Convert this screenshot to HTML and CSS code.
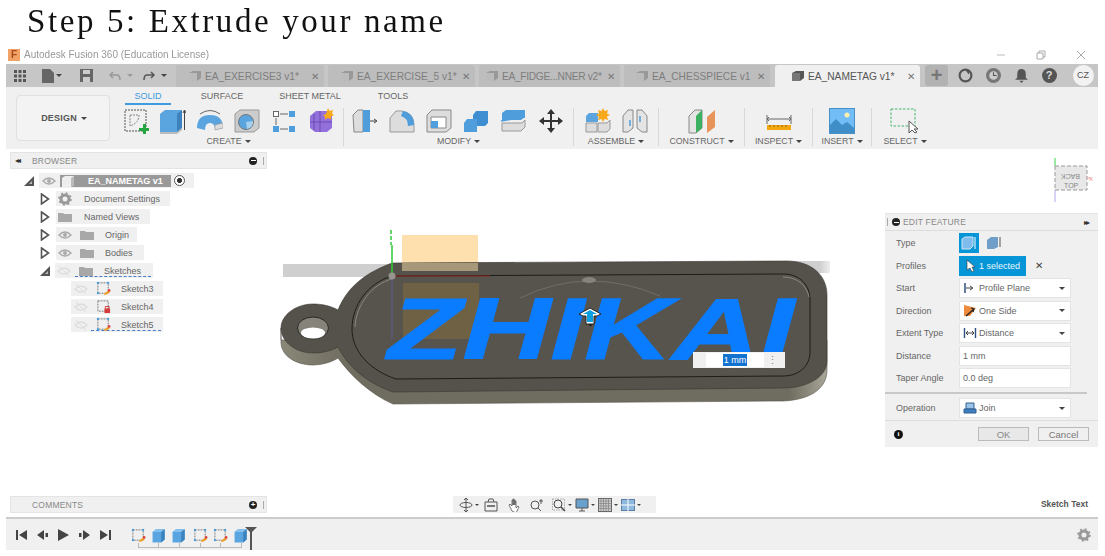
FILE: index.html
```html
<!DOCTYPE html>
<html lang="en">
<head>
<meta charset="utf-8">
<title>Step 5: Extrude your name</title>
<link rel="stylesheet" href="styles.css">
</head>
<body>
<svg class="defs" width="0" height="0" aria-hidden="true">
  <defs>
    <symbol id="box" viewBox="0 0 26 26"><path d="M1 7l6-5h15v18l-6 5H1z" fill="#5aa5e0"/><path d="M1 7l6-5h15l-6 5z" fill="#86c0ee"/><path d="M16 7l6-5v18l-6 5z" fill="#3c82bd"/></symbol>
    <symbol id="sk" viewBox="0 0 16 16"><rect x="2" y="2" width="11" height="11" fill="none" stroke="#777" stroke-dasharray="2 1"/><g fill="#3b9be0"><rect x="1" y="1" width="2" height="2"/><rect x="12" y="1" width="2" height="2"/><rect x="1" y="12" width="2" height="2"/></g><path d="M8 14l5-4 2 2-5 3z" fill="#f0a020"/><circle cx="14" cy="10" r="1.4" fill="#e04040"/></symbol>
    <symbol id="eye" viewBox="0 0 14 10"><path d="M1 5q6-6 12 0q-6 6-12 0z" fill="none" stroke="#aaa" stroke-width="1.4"/><circle cx="7" cy="5" r="2" fill="#aaa"/></symbol>
    <symbol id="eyeoff" viewBox="0 0 14 10"><path d="M1 5q6-6 12 0q-6 6-12 0z" fill="none" stroke="#ddd" stroke-width="1.4"/><path d="M2 0l10 10" stroke="#ddd"/></symbol>
    <symbol id="folder" viewBox="0 0 14 10"><path d="M0 1h5l1 1h8v8H0z" fill="#a8a8a8"/></symbol>
    <symbol id="tab3d" viewBox="0 0 14 12"><path d="M1 3l4-2h8v7l-4 3H1z" fill="#999"/><path d="M1 3h8v8H1z" fill="#bbb"/></symbol>
    <symbol id="tri" viewBox="0 0 10 12"><path d="M1.5 1l7 5-7 5z" fill="#fff" stroke="#555" stroke-width="1.6"/></symbol>
    <symbol id="tridown" viewBox="0 0 12 12"><path d="M1 11L11 1v10z" fill="#555"/><path d="M6 9l3-3v3z" fill="#bbb"/></symbol>
  </defs>
</svg>
<h1 class="heading">Step 5: Extrude your name</h1>
<div class="app">
  <header class="titlebar">
    <span class="logo">F</span>
    <span class="title">Autodesk Fusion 360 (Education License)</span>
    <span class="winctl">
      <svg width="10" height="10" viewBox="0 0 10 10"><path d="M1 5h8" stroke="#bbb"/></svg>
      <svg width="10" height="10" viewBox="0 0 10 10"><path d="M1 3h6v6H1zM3 3V1h6v6H7" fill="none" stroke="#aaa"/></svg>
      <svg width="10" height="10" viewBox="0 0 10 10"><path d="M1 1l8 8M9 1l-8 8" stroke="#aaa"/></svg>
    </span>
  </header>
  <nav class="tabbar">
    <div class="qa">
      <svg class="qa-grid" width="12" height="12" viewBox="0 0 12 12"><path d="M0 0h3v3H0zM4.500 0h3v3h-3zM9 0h3v3H9zM0 4.500h3v3H0zM4.500 4.500h3v3h-3zM9 4.500h3v3H9zM0 9h3v3H0zM4.500 9h3v3h-3zM9 9h3v3H9z" fill="#555"/></svg>
      <svg class="qa-file" width="12" height="14" viewBox="0 0 12 14"><path d="M0 0h8l4 4v10H0z" fill="#666"/></svg><i class="caret qa-c1"></i>
      <svg class="qa-save" width="13" height="13" viewBox="0 0 13 13"><path d="M0 0h13v13H0z" fill="#666"/><path d="M3 1h7v4H3zM3 8h7v5H3z" fill="#ccc"/></svg>
      <svg class="qa-undo" width="12" height="10" viewBox="0 0 12 10"><path d="M4 1L1 4l3 3M1 4h7q3 0 3 5" fill="none" stroke="#999" stroke-width="1.5"/></svg><i class="caret caret-light qa-c2"></i>
      <svg class="qa-redo" width="12" height="10" viewBox="0 0 12 10"><path d="M8 1l3 3-3 3M11 4H4Q1 4 1 9" fill="none" stroke="#555" stroke-width="1.5"/></svg><i class="caret qa-c3"></i>
    </div>
    <div class="doc-tab tab-1"><svg class="tab-ico" width="14" height="12"><use href="#tab3d"/></svg><span class="tab-name">EA_EXERCISE3 v1*</span><span class="tab-x">✕</span></div>
    <div class="doc-tab tab-2"><svg class="tab-ico" width="14" height="12"><use href="#tab3d"/></svg><span class="tab-name">EA_EXERCISE_5 v1*</span><span class="tab-x">✕</span></div>
    <div class="doc-tab tab-3"><svg class="tab-ico" width="14" height="12"><use href="#tab3d"/></svg><span class="tab-name">EA_FIDGE...NNER v2*</span><span class="tab-x">✕</span></div>
    <div class="doc-tab tab-4"><svg class="tab-ico" width="14" height="12"><use href="#tab3d"/></svg><span class="tab-name">EA_CHESSPIECE v1</span><span class="tab-x">✕</span></div>
    <div class="doc-tab tab-active"><svg class="tab-ico" width="14" height="12" viewBox="0 0 14 12"><path d="M1 3l4-2h8v7l-4 3H1z" fill="#555"/><path d="M1 3h8v8H1z" fill="#777"/></svg><span class="tab-name">EA_NAMETAG v1*</span><span class="tab-x">✕</span></div>
    <div class="tab-plus">+</div>
    <div class="tray">
      <svg width="15" height="15" viewBox="0 0 14 14"><circle cx="7" cy="7" r="5.500" fill="none" stroke="#555" stroke-width="2"/><path d="M7 2l4 1-1 3z" fill="#555"/></svg>
      <svg width="15" height="15" viewBox="0 0 14 14"><circle cx="7" cy="7" r="7" fill="#777"/><circle cx="7" cy="7" r="4" fill="#ccc"/><path d="M7 4v3h3" fill="none" stroke="#555"/></svg>
      <svg width="15" height="15" viewBox="0 0 14 14"><path d="M7 1q4 0 4 5v3l2 2H1l2-2V6q0-5 4-5zM5 12h4l-2 2z" fill="#555"/></svg>
      <span class="help">?</span>
      <span class="avatar">CZ</span>
    </div>
  </nav>
  <section class="toolbar">
    <button class="design">DESIGN<i class="caret"></i></button>
    <div class="ribbon">
      <div class="ribbon-tabs">
        <span class="rt rt-solid">SOLID</span>
        <span class="rt rt-surface">SURFACE</span>
        <span class="rt rt-sheet">SHEET METAL</span>
        <span class="rt rt-tools">TOOLS</span>
      </div>
      <div class="groups">
        <div class="group g-create">
          <div class="icons">
            <svg width="26" height="26" viewBox="0 0 26 26"><rect x="2" y="2" width="21" height="21" fill="none" stroke="#555" stroke-dasharray="2 1"/><path d="M7 7h9q0 8-9 11z" fill="none" stroke="#888" stroke-dasharray="2 1"/><path d="M16 20h4v-4h3v4h3v3h-3v3h-3v-3h-4z" fill="#26a640"/></svg>
            <svg width="26" height="26" viewBox="0 0 26 26"><path d="M0 6l5-4h17v18l-5 4H0z" fill="#5aa5e0"/><path d="M17 6l5-4v18l-5 4z" fill="#3c82bd"/><path d="M0 24h17l5-4v2l-5 4H0z" fill="#bbb"/><path d="M24.500 22V3M23 5l1.500-3L26 5" fill="none" stroke="#444"/></svg>
            <svg width="26" height="26" viewBox="0 0 26 26"><path d="M0 20q0-13 13-13t13 13l-8 2q0-7-5-7t-5 7z" fill="#5aa5e0"/><path d="M18 22l8-2v-5l-8 2z" fill="#ddd" stroke="#999" stroke-width=".6"/><path d="M3 6q10-7 20 0" fill="none" stroke="#666"/></svg>
            <svg width="26" height="26" viewBox="0 0 26 26"><path d="M1 6l5-4h19v18l-5 4H1z" fill="#ccc" stroke="#999"/><circle cx="12" cy="14" r="7.500" fill="#5aa5e0" stroke="#777"/><path d="M12 14l7-1a7 7 0 0 1-6 8z" fill="#a8d0ee"/></svg>
            <svg width="26" height="26" viewBox="0 0 26 26"><g fill="#4f9ddb"><rect x="18" y="3" width="6" height="6"/><rect x="2" y="18" width="6" height="6"/><rect x="18" y="18" width="6" height="6"/></g><rect x="2.500" y="3.500" width="5" height="5" fill="#fff" stroke="#666"/><path d="M9 6h8M9 21h8M5 10v7" stroke="#666"/></svg>
            <svg width="26" height="26" viewBox="0 0 26 26"><path d="M2 8l6-5h12l4 5v12l-5 4H7l-5-4z" fill="#9470dc"/><path d="M2 14h22M12 3v21M6 6v16" stroke="#6b4cae"/><path d="M20 0l1.500 3 3.500-1-1 3.500 2 1.500-3 1.500v3l-3-1.500-3 1.500V9l-2-2 3-1z" fill="#f7a81b"/></svg>
          </div>
          <span class="glabel">CREATE<i class="caret"></i></span>
        </div>
        <div class="group g-modify">
          <div class="icons">
            <svg width="26" height="26" viewBox="0 0 26 26"><path d="M1 7l5-5h5v22H2z" fill="#ddd" stroke="#888"/><path d="M11 2h7v22h-7z" fill="#4f9ddb"/><path d="M18 13h6M22 11l3 2-3 2" fill="none" stroke="#444"/></svg>
            <svg width="26" height="26" viewBox="0 0 26 26"><path d="M1 24V10l6-7h6q12 2 12 14v7z" fill="#ddd" stroke="#999"/><path d="M14 3q11 2 11 14l-6 1q0-8-7-10z" fill="#4f9ddb"/></svg>
            <svg width="26" height="26" viewBox="0 0 26 26"><path d="M1 7l5-5h19v18l-5 4H1z" fill="#ddd" stroke="#888"/><path d="M5 9h15v11H5z" fill="#fff" stroke="#888"/><path d="M5 13h7v7H5z" fill="#4f9ddb"/></svg>
            <svg width="26" height="26" viewBox="0 0 26 26"><path d="M10 7l3-4h12v12l-3 3H10z" fill="#3f8ed2"/><path d="M1 15l3-4h10v13H1z" fill="#4f9ddb"/></svg>
            <svg width="26" height="26" viewBox="0 0 26 26"><path d="M2 5l4-3h19v7l-4 3H2z" fill="#4f9ddb"/><path d="M1 13l24-4" stroke="#4f9ddb" stroke-width="1.500"/><path d="M2 15h20l3-3v7l-4 4H2z" fill="#ddd" stroke="#999"/></svg>
            <svg width="28" height="26" viewBox="0 0 28 26"><path d="M14 1l4 5h-3v6h6V9l5 4-5 4v-3h-6v6h3l-4 5-4-5h3v-6H7v3l-5-4 5-4v3h6V6h-3z" fill="#333"/></svg>
          </div>
          <span class="glabel">MODIFY<i class="caret"></i></span>
        </div>
        <div class="group g-assemble">
          <div class="icons">
            <svg width="26" height="26" viewBox="0 0 26 26"><path d="M1 8l3-3h9v9H1z" fill="#5aa5e0"/><path d="M1 15h11v9H1zM13 15h9l3-3v9l-3 3h-9z" fill="#ddd" stroke="#999"/><path d="M18 0l1.500 3 3.500-1-1 3.500 3 1.500-3 1.500 1 3.500-3.500-1-1.500 3-1.500-3-3.500 1 1-3.500-3-1.500 3-1.500-1-3.500 3.500 1z" fill="#f7a81b"/></svg>
            <svg width="26" height="26" viewBox="0 0 26 26"><path d="M1 24V8l5-6h5v18l-5 4zM25 24V8l-5-6h-5v18l5 4z" fill="#e4e4e4" stroke="#888"/><path d="M8 12v6M18 8v6" stroke="#4f9ddb" stroke-width="1.500"/></svg>
          </div>
          <span class="glabel">ASSEMBLE<i class="caret"></i></span>
        </div>
        <div class="group g-construct">
          <div class="icons">
            <svg width="27" height="26" viewBox="0 0 27 26"><path d="M1 8l6-6h7v18l-6 5H1z" fill="#e4e4e4" stroke="#888"/><path d="M8 8l6-6v18l-6 5z" fill="#3bb060"/><path d="M19 9l8-7v17l-8 6z" fill="#e8935a"/></svg>
          </div>
          <span class="glabel">CONSTRUCT<i class="caret"></i></span>
        </div>
        <div class="group g-inspect">
          <div class="icons">
            <svg width="26" height="26" viewBox="0 0 26 26"><path d="M1 7v9M25 7v9M1 11h24M3 9l-2 2 2 2M23 9l2 2-2 2" fill="none" stroke="#666"/><path d="M1 17h24v5H1z" fill="#f4a70e"/><path d="M4 17v2M8 17v2M12 17v2M16 17v2M20 17v2" stroke="#8a6a10"/></svg>
          </div>
          <span class="glabel">INSPECT<i class="caret"></i></span>
        </div>
        <div class="group g-insert">
          <div class="icons">
            <svg width="26" height="26" viewBox="0 0 26 26"><rect x="0.500" y="0.500" width="25" height="25" fill="#72bdf5" stroke="#4a90c8"/><circle cx="18" cy="7" r="2.500" fill="#fff0b0"/><path d="M1 25V17l6-6 6 6 5-3 7 6v5z" fill="#3f8ec8"/></svg>
          </div>
          <span class="glabel">INSERT<i class="caret"></i></span>
        </div>
        <div class="group g-select">
          <div class="icons">
            <svg width="30" height="26" viewBox="0 0 30 26"><rect x="1" y="1" width="24" height="17" fill="none" stroke="#45b56c" stroke-dasharray="2.500 1.500"/><path d="M19 13v12l3-3 3 3 2-1-3-3h4z" fill="#fff" stroke="#555"/></svg>
          </div>
          <span class="glabel">SELECT<i class="caret"></i></span>
        </div>
      </div>
    </div>
  </section>
  <main class="viewport">
    <svg class="model" width="1092" height="368" viewBox="6 149 1092 368">
      <defs>
        <linearGradient id="wall" x1="0" x2="1"><stop offset="0" stop-color="#8a8878"/><stop offset=".12" stop-color="#6f6c60"/><stop offset=".93" stop-color="#6f6c60"/><stop offset="1" stop-color="#a8a698"/></linearGradient>
        <linearGradient id="fade" x1="0" x2="1"><stop offset=".75" stop-color="#cfcfcf"/><stop offset="1" stop-color="#efefef"/></linearGradient>
      </defs>
      <rect class="ground" x="283" y="264" width="110" height="13"/>
      <rect class="ground-r" x="790" y="261" width="40" height="12"/>
      <rect class="orange" x="402" y="235" width="76" height="36"/>
      <!-- side wall -->
      <path class="wall" d="M281 328V342C281 356 296 365 313 365C322 365 332 362 338 358C350 375 370 394 393 404L783 401C808 400 827 390 827 370V340H281Z"/>
      <!-- top face -->
      <path class="face" d="M392 263L787 261C811 261 827 275 827 295V361C827 377 807 388 783 388L393 392C370 384 350 370 338 347C331 351 322 353 313 353C296 353 281 342 281 328C281 315 296 304 313 304C322 304 331 306 338 310C348 285 368 272 392 263Z"/>
      <path class="rim" d="M392 276L783 274C801 274 810 286 810 300V352C810 366 799 376 783 376L396 379C372 371 352 353 352 329C352 305 368 283 392 276Z"/>
      <path class="rim-soft" d="M392 279C372 284 356 305 355 327"/>
      <path class="rim-soft" d="M783 277C799 277 807 287 809 297"/>
      <!-- ring hole -->
      <ellipse class="hole-bore" cx="313" cy="328" rx="15.500" ry="11"/>
      <ellipse class="hole-w" cx="313" cy="333" rx="12" ry="5.500"/>
      <rect class="orange-over" x="403" y="283" width="76" height="56"/>
      <rect class="orange-rim" x="402" y="263" width="76" height="8"/>
      <path class="arc" d="M520 298q35-17 70-17t70 15"/>
      <ellipse class="disc" cx="589" cy="280" rx="7" ry="3"/>
      <path class="red-axis" d="M392 276H490"/>
      <path class="blue-axis" d="M392 278V340"/>
      <path class="green-solid" d="M392 245V276"/>
      <path class="green-dash" d="M391 230V245"/>
      <circle class="node" cx="392" cy="276" r="3.500"/>
      <text class="zhikai" x="388" y="359" textLength="406" lengthAdjust="spacingAndGlyphs">ZHIKAI</text>
      <path class="manip-stem" d="M590.500 320v6"/>
      <path class="manip" d="M590 308l11 6-4 2h-3v8h-8v-8h-3l-4-2z"/>
      <path class="manip-in" d="M590 310l7 4h-4v8h-6v-8h-4z"/>
    </svg>

    <div class="viewcube">
      <svg width="46" height="50" viewBox="0 0 46 50"><rect x="6" y="8" width="32" height="24" fill="#e8e8e8" stroke="#999" stroke-dasharray="4 2"/><path d="M6 8V0" stroke="#7be08a" stroke-width="1.500"/><path d="M38 20h3" stroke="#f2a0a0"/><path d="M6 32v12" stroke="#b0a8e8"/><text class="cube-txt" x="13" y="14" transform="rotate(180 22 15)">BACK</text><text class="cube-txt" x="15" y="30">TOP</text><text class="cube-x" x="40" y="23">X</text></svg>
    </div>

    <aside class="browser">
      <div class="panelhead">
        <span class="rew">◂◂</span><span class="ph-title">BROWSER</span>
        <span class="minus"></span><span class="grip"></span>
      </div>
      <ul class="tree">
        <li class="row r-root">
          <svg class="arrow" width="12" height="12"><use href="#tridown"/></svg>
          <div class="chip chip-root">
            <svg class="ico-eye" width="14" height="10"><use href="#eye"/></svg>
            <div class="rootbar"><svg width="14" height="12" viewBox="0 0 14 12"><path d="M1 3l3-2h9v9l-3 2H1z" fill="#eee"/><path d="M10 3l3-2v9l-3 2z" fill="#bbb"/></svg><span>EA_NAMETAG v1</span></div>
            <span class="radio"></span>
          </div>
        </li>
        <li class="row r-l1">
          <svg class="arrow-r" width="10" height="12"><use href="#tri"/></svg>
          <div class="chip w-doc">
            <svg class="gear" width="14" height="14" viewBox="0 0 14 14"><circle cx="7" cy="7" r="4" fill="none" stroke="#999" stroke-width="3"/><circle cx="7" cy="7" r="6" fill="none" stroke="#999" stroke-width="1.600" stroke-dasharray="2 2.700"/></svg>
            <span class="lbl">Document Settings</span>
          </div>
        </li>
        <li class="row r-l1">
          <svg class="arrow-r" width="10" height="12"><use href="#tri"/></svg>
          <div class="chip w-views">
            <svg class="folder-a" width="14" height="10"><use href="#folder"/></svg>
            <span class="lbl">Named Views</span>
          </div>
        </li>
        <li class="row r-l1">
          <svg class="arrow-r" width="10" height="12"><use href="#tri"/></svg>
          <div class="chip w-origin">
            <svg class="ico-eye-2" width="14" height="10"><use href="#eye"/></svg>
            <svg class="folder-b" width="14" height="10"><use href="#folder"/></svg>
            <span class="lbl-b">Origin</span>
          </div>
        </li>
        <li class="row r-l1">
          <svg class="arrow-r" width="10" height="12"><use href="#tri"/></svg>
          <div class="chip w-bodies">
            <svg class="ico-eye-2" width="14" height="10"><use href="#eye"/></svg>
            <svg class="folder-b" width="14" height="10"><use href="#folder"/></svg>
            <span class="lbl-b">Bodies</span>
          </div>
        </li>
        <li class="row r-l1">
          <svg class="arrow-d" width="12" height="12"><use href="#tridown"/></svg>
          <div class="chip w-sketches wavy">
            <svg class="ico-eye-2" width="14" height="10"><use href="#eyeoff"/></svg>
            <svg class="folder-b" width="14" height="10"><use href="#folder"/></svg>
            <span class="lbl-b">Sketches</span>
          </div>
        </li>
        <li class="row r-l2">
          <div class="chip w-sk">
            <svg class="ico-eye-3" width="14" height="10"><use href="#eyeoff"/></svg>
            <svg class="sk-ico" width="15" height="15"><use href="#sk"/></svg>
            <span class="lbl-c">Sketch3</span>
          </div>
        </li>
        <li class="row r-l2">
          <div class="chip w-sk">
            <svg class="ico-eye-3" width="14" height="10"><use href="#eyeoff"/></svg>
            <svg class="sk-ico" width="15" height="15" viewBox="0 0 16 16"><rect x="2" y="2" width="11" height="11" fill="none" stroke="#777" stroke-dasharray="2 1"/><rect x="9" y="10" width="6" height="5" fill="#d83b3b"/><path d="M10 10V8h4v2" fill="none" stroke="#d83b3b"/></svg>
            <span class="lbl-c">Sketch4</span>
          </div>
        </li>
        <li class="row r-l2">
          <div class="chip w-sk wavy">
            <svg class="ico-eye-3" width="14" height="10"><use href="#eyeoff"/></svg>
            <svg class="sk-ico" width="15" height="15"><use href="#sk"/></svg>
            <span class="lbl-c">Sketch5</span>
          </div>
        </li>
      </ul>
    </aside>

    <div class="dimbox">
      <span class="dim-grip"></span>
      <span class="dim-input"><span class="dim-sel">1 mm</span></span>
      <span class="dim-dots">⋮</span>
    </div>

    <aside class="feature">
      <div class="feat-head"><span class="grip"></span><span class="minus"></span><span class="ph-title feat-title">EDIT FEATURE</span><span class="ffw">▸▸</span></div>
      <div class="feat-body">
        <div class="frow"><label>Type</label>
          <span class="type-on"><svg width="16" height="14" viewBox="0 0 16 14"><path d="M1 3l3-2h8v9l-3 3H1z" fill="#7dbcec" stroke="#cfe6f7"/><path d="M14 1v12" stroke="#fff"/></svg></span>
          <svg class="type-off" width="16" height="14" viewBox="0 0 16 14"><path d="M1 4l4-3h7v10l-4 2H1z" fill="#6f9fc8"/><path d="M14 1v10" stroke="#555"/></svg>
        </div>
        <div class="frow"><label>Profiles</label>
          <span class="profiles"><svg width="10" height="13" viewBox="0 0 10 13"><path d="M1 1v10l3-2 2 4 2-1-2-4h3z" fill="#fff" stroke="#333" stroke-width=".6"/></svg>1 selected</span>
          <span class="clear">✕</span>
        </div>
        <div class="frow"><label>Start</label>
          <span class="sel"><svg width="14" height="12" viewBox="0 0 14 12"><path d="M2 1v10" stroke="#2f4f80" stroke-width="1.500"/><path d="M3 6h6M7 4l3 2-3 2" fill="none" stroke="#444"/></svg><span>Profile Plane</span><i class="caret"></i></span>
        </div>
        <div class="frow"><label>Direction</label>
          <span class="sel"><svg width="14" height="13" viewBox="0 0 14 13"><path d="M1 1l12 3-6 8H1z" fill="#ee8a3c"/><path d="M3 12l8-7M8 4l3 1-1 3" fill="none" stroke="#222" stroke-width="1.200"/></svg><span>One Side</span><i class="caret"></i></span>
        </div>
        <div class="frow"><label>Extent Type</label>
          <span class="sel"><svg width="14" height="12" viewBox="0 0 14 12"><path d="M1.500 1v10M12.500 1v10" stroke="#2f4f80" stroke-width="1.400"/><path d="M3 6h8M5 4L3 6l2 2M9 4l2 2-2 2" fill="none" stroke="#444"/></svg><span>Distance</span><i class="caret"></i></span>
        </div>
        <div class="frow"><label>Distance</label><span class="inp">1 mm</span></div>
        <div class="frow"><label>Taper Angle</label><span class="inp">0.0 deg</span></div>
        <div class="fsep"></div>
        <div class="frow"><label>Operation</label>
          <span class="sel"><svg width="14" height="12" viewBox="0 0 14 12"><path d="M3 1h8v6H3z" fill="#9cc4e8" stroke="#2f5f90"/><path d="M1 7h12v4H1z" fill="#3f7fbf" stroke="#2f5f90"/></svg><span>Join</span><i class="caret"></i></span>
        </div>
      </div>
      <div class="feat-foot">
        <span class="info">i</span>
        <button class="btn btn-ok">OK</button>
        <button class="btn btn-cancel">Cancel</button>
      </div>
    </aside>

    <div class="comments"><span class="ph-title">COMMENTS</span><span class="plus"></span><span class="grip"></span></div>

    <div class="navbar">
      <svg width="14" height="14" viewBox="0 0 14 14"><ellipse cx="7" cy="7" rx="6" ry="2.500" fill="none" stroke="#555"/><path d="M7 0v14M5 2l2-2 2 2M5 12l2 2 2-2" fill="none" stroke="#555"/></svg><i class="caret"></i>
      <svg class="nv-look" width="14" height="14" viewBox="0 0 14 14"><path d="M1 4h12v9H1zM4 4l1-3h4l1 3" fill="none" stroke="#555"/><path d="M3 7h8v2H3z" fill="#777"/></svg>
      <svg class="nv-hand" width="14" height="14" viewBox="0 0 14 14"><path d="M4 13L1 7l1-1 2 2V2h1v5-6h1v6-5h1v5-4h1v7l2-2 1 1-3 6z" fill="#fff" stroke="#555" stroke-width=".8"/></svg>
      <svg class="nv-zoom" width="14" height="14" viewBox="0 0 14 14"><circle cx="5" cy="7" r="4" fill="none" stroke="#555"/><path d="M8 10l3 3M11 1v5M9 3h4" stroke="#555"/></svg>
      <svg class="nv-zw" width="14" height="14" viewBox="0 0 14 14"><rect x="0.500" y="1" width="12" height="11" fill="none" stroke="#aaa" stroke-dasharray="1.500 1"/><circle cx="6" cy="6" r="4" fill="none" stroke="#444"/><path d="M9 9l4 4" stroke="#444" stroke-width="1.500"/></svg><i class="caret"></i>
      <svg class="nv-disp" width="14" height="14" viewBox="0 0 14 14"><path d="M1 1h12v9H1z" fill="#6aa0cc" stroke="#555"/><path d="M4 13h6M7 10v3" stroke="#555"/></svg><i class="caret"></i>
      <svg class="nv-grid" width="14" height="14" viewBox="0 0 14 14"><rect x="0.500" y="0.500" width="13" height="13" fill="#ccc" stroke="#666"/><path d="M3 0v14M5.500 0v14M8 0v14M10.500 0v14M0 3h14M0 5.500h14M0 8h14M0 10.500h14" stroke="#777" stroke-width=".6"/></svg><i class="caret"></i>
      <svg class="nv-vp" width="14" height="14" viewBox="0 0 14 14"><rect x="0.500" y="1.500" width="13" height="11" fill="#8fb8de" stroke="#5a7fa8"/><path d="M7 1v12M0 7h14" stroke="#fff"/></svg><i class="caret"></i>
    </div>
    <div class="status">Sketch Text</div>
  </main>
  <footer class="timeline">
    <div class="player">
      <svg width="11" height="10" viewBox="0 0 11 10"><path d="M0 0h2v10H0zM11 0v10L3 5z" fill="#444"/></svg>
      <svg width="11" height="10" viewBox="0 0 11 10"><path d="M7 0v10L0 5zM8.500 3H11v4H8.500z" fill="#444"/></svg>
      <svg width="11" height="12" viewBox="0 0 11 12"><path d="M0 0l11 6-11 6z" fill="#444"/></svg>
      <svg width="11" height="10" viewBox="0 0 11 10"><path d="M4 0v10l7-5zM0 3h2.500v4H0z" fill="#444"/></svg>
      <svg width="11" height="10" viewBox="0 0 11 10"><path d="M9 0h2v10H9zM0 0v10l8-5z" fill="#444"/></svg>
    </div>
    <div class="steps">
      <svg width="15" height="15"><use href="#sk"/></svg>
      <svg width="15" height="15"><use href="#box"/></svg>
      <svg width="15" height="15"><use href="#box"/></svg>
      <svg width="15" height="15"><use href="#sk"/></svg>
      <svg width="15" height="15"><use href="#sk"/></svg>
      <svg width="15" height="15"><use href="#box"/></svg>
      <span class="bracket"></span>
      <span class="marker"></span>
    </div>
    <svg class="cog" width="14" height="14" viewBox="0 0 14 14"><circle cx="7" cy="7" r="4" fill="none" stroke="#999" stroke-width="3"/><circle cx="7" cy="7" r="6" fill="none" stroke="#999" stroke-width="1.600" stroke-dasharray="2 2.700"/></svg>
  </footer>
</div>
</body>
</html>
```

FILE: styles.css
```css
* { box-sizing: border-box; }
html, body { margin: 0; padding: 0; height: 556px; overflow: hidden; background: #fff; }
body { font-family: "Liberation Sans", Arial, sans-serif; color: #666; }
.defs { display: block; height: 0; }
.heading {
  margin: 0; height: 45px; padding: 1px 0 0 27px;
  font: 400 33px/40px "Liberation Serif", serif; letter-spacing: 2.6px; color: #111;
  filter: blur(.25px);
}
.app { margin-left: 6px; width: 1092px; height: 505px; display: flex; flex-direction: column; filter: blur(.5px); }

.caret { display: inline-block; width: 0; height: 0; margin-left: 4px; vertical-align: middle;
  border-left: 3px solid transparent; border-right: 3px solid transparent; border-top: 3px solid #444; }
.caret-light { border-top-color: #999; }

/* title bar */
.titlebar { height: 19px; flex: none; display: flex; align-items: center; padding-left: 2px; }
.logo { width: 12px; height: 12px; background: #f2a264; color: #a8481a; font: 700 10px/12px "Liberation Sans", sans-serif; text-align: center; }
.title { margin-left: 4px; font-size: 10px; color: #999; }
.winctl { margin-left: auto; width: 90px; margin-right: 12px; display: flex; justify-content: space-between; }

/* tab bar */
.tabbar { height: 23px; flex: none; background: #c6c6c6; display: flex; align-items: flex-end; position: relative; }
.qa { width: 170px; height: 23px; flex: none; position: relative; }
.qa > * { position: absolute; }
.qa-grid { left: 8px; top: 6px; }
.qa-file { left: 36px; top: 5px; }
.qa-c1 { left: 50px; top: 10px; margin: 0; }
.qa-save { left: 74px; top: 5px; }
.qa-undo { left: 103px; top: 7px; }
.qa-c2 { left: 121px; top: 10px; margin: 0; }
.qa-redo { left: 137px; top: 7px; }
.qa-c3 { left: 155px; top: 10px; margin: 0; }
.doc-tab { flex: none; height: 22px; margin-right: 4px; background: #bdbdbd; border-radius: 3px 3px 0 0; display: flex; align-items: center; padding: 0 5px 0 12px; font-size: 10.200px; color: #7d7d7d; }
.tab-1 { width: 148px; }
.tab-2 { width: 147px; }
.tab-3 { width: 141px; padding-left: 6px; letter-spacing: -.3px; }
.tab-4 { width: 146px; padding-left: 11px; margin-right: 5px; }
.tab-active { width: 145px; background: #f0f0f0; color: #555; padding-left: 16px; margin-right: 5px; }
.tab-ico { flex: none; margin-right: 3px; }
.tab-name { white-space: nowrap; flex: 1; min-width: 0; }
.tab-x { flex: none; font-size: 10px; color: #777; margin-left: 2px; }
.tab-plus { flex: none; width: 23px; height: 21px; background: #b2b2b2; border-radius: 3px; font: 700 20px/20px "Liberation Sans", sans-serif; color: #777; text-align: center; margin-bottom: 1px; }
.tray { flex: 1; height: 23px; display: flex; align-items: center; padding-left: 9.500px; gap: 13px; }
.tray svg { flex: none; }
.help { flex: none; width: 15px; height: 15px; border-radius: 50%; background: #555; color: #ddd; font: 700 11px/15px "Liberation Sans", sans-serif; text-align: center; }
.avatar { flex: none; width: 21px; height: 21px; border-radius: 50%; background: #f2f2f2; color: #555; font-size: 9px; line-height: 21px; text-align: center; margin-left: 3px; }

/* toolbar */
.toolbar { height: 62px; flex: none; background: #f0f0f0; display: flex; padding-left: 10px; }
.design { width: 94px; height: 46px; margin-top: 8px; flex: none; background: #f3f3f3; border: 1px solid #e0e0e0; border-radius: 4px; font: 700 9px "Liberation Sans", sans-serif; color: #555; letter-spacing: .2px; padding-left: 8px; }
.ribbon { flex: 1; padding-left: 4px; margin-top: 0; }
.ribbon-tabs { display: flex; height: 18px; padding-left: 11px; }
.rt { height: 18px; text-align: center; font-size: 9px; line-height: 17px; color: #666; padding-top: 1px; }
.rt-solid { width: 46px; color: #3d9be0; border-bottom: 2px solid #3d9be0; }
.rt-surface { width: 102px; }
.rt-sheet { width: 74px; }
.rt-tools { width: 92px; }
.groups { display: flex; height: 44px; }
.group { display: flex; flex-direction: column; align-items: center; border-right: 1px solid #d8d8d8; height: 38px; margin-top: 3px; }
.icons { display: flex; gap: 11px; height: 26px; margin-bottom: 2px; }
.g-create { width: 230px; }
.g-modify { width: 230px; }
.g-assemble { width: 85px; }
.g-construct { width: 86px; }
.g-inspect { width: 68px; }
.g-insert { width: 59px; }
.g-select { width: 66px; border-right: 0; }
.glabel { font-size: 8.800px; line-height: 11px; color: #666; white-space: nowrap; }
.glabel .caret { margin-left: 3px; }

/* viewport */
.viewport { height: 368px; flex: none; position: relative; background: #fff; }
.model { position: absolute; left: 0; top: 0; }
.ground { fill: #cfcfcf; }
.ground-r { fill: url(#fade); }
.orange { fill: #fde0ae; }
.wall { fill: url(#wall); stroke: #55534a; stroke-width: .6; }
.face { fill: #55524c; stroke: #3a3833; stroke-width: .6; }
.rim { fill: #57544d; stroke: #1e1d1a; stroke-width: 1; }
.rim-soft { fill: none; stroke: #8a8880; stroke-width: 1; }
.hole-w { fill: #fff; }
.hole-bore { fill: #85837a; stroke: #2a2926; stroke-width: 1; }
.orange-over { fill: #6f6144; }
.orange-rim { fill: #a8987a; }
.arc { fill: none; stroke: #77756e; stroke-width: .8; }
.disc { fill: #85837b; }
.red-axis { fill: none; stroke: #8c2a20; stroke-width: 1; }
.blue-axis { fill: none; stroke: #5a5a90; stroke-width: 1; }
.green-solid { fill: none; stroke: #33c93a; stroke-width: 1.500; }
.green-dash { fill: none; stroke: #33c93a; stroke-width: 1.500; stroke-dasharray: 4 2; }
.node { fill: #96948c; }
.zhikai { font: italic 700 88px "Liberation Sans", sans-serif; fill: #0a7cff; stroke: #0a7cff; stroke-width: 1.200px; }
.manip { fill: #fff; stroke: #222; stroke-width: 1; }
.manip-in { fill: #0e9fe0; }
.manip-stem { fill: none; stroke: #111; stroke-width: 2; }

.viewcube { position: absolute; left: 1043px; top: 9px; }
.cube-txt { font-size: 7px; fill: #888; }
.cube-x { font-size: 6px; fill: #f08080; }

/* browser */
.panelhead, .comments { height: 17px; background: #f0f0f0; border: 1px solid #e4e4e4; display: flex; align-items: center; }
.browser { position: absolute; left: 4px; top: 3px; width: 257px; }
.rew { font-size: 8px; letter-spacing: -2px; color: #333; margin-left: 4px; width: 17px; }
.ph-title { font-size: 8.500px; color: #888; letter-spacing: .2px; }
.minus, .plus { width: 8px; height: 8px; border-radius: 50%; background: #222; position: relative; margin-left: auto; }
.minus::after { content: ""; position: absolute; left: 1.500px; right: 1.500px; top: 3.500px; height: 1px; background: #fff; }
.plus::after { content: "+"; position: absolute; inset: 0; color: #fff; font: 700 8px/8px "Liberation Sans", sans-serif; text-align: center; }
.grip { width: 1px; height: 8px; background: #aaa; margin: 0 2px 0 6px; }
.tree { list-style: none; margin: 4px 0 0; padding: 0; display: flex; flex-direction: column; gap: 3px; }
.row { height: 15px; display: flex; align-items: center; position: relative; font-size: 9px; color: #666; }
.r-root { padding-left: 13px; }
.r-l1 { padding-left: 30px; }
.r-l2 { padding-left: 61px; }
.arrow { margin-right: 4px; flex: none; }
.arrow-r { margin-right: 6px; flex: none; }
.arrow-d { margin: 0 4px 0 -1px; flex: none; }
.chip { height: 15px; background: #f0f0f0; display: flex; align-items: center; position: relative; }
.chip-root { width: 155px; padding-left: 3px; }
.ico-eye { margin-right: 4px; flex: none; }
.rootbar { width: 111px; height: 12px; margin-right: 3px; background: #9a9a9a; display: flex; align-items: center; color: #fff; font-weight: 700; font-size: 9px; padding-left: 1px; }
.rootbar span { margin-left: 13px; }
.radio { width: 11px; height: 11px; border: 1px solid #555; border-radius: 50%; background: radial-gradient(circle, #333 2.200px, #fff 2.800px); }
.w-doc { width: 114px; }
.w-views { width: 94px; }
.w-origin { width: 81px; }
.w-bodies { width: 88px; }
.w-sketches { width: 98px; }
.w-sk { width: 92px; }
.gear { margin-left: 2px; margin-right: 12px; flex: none; }
.folder-a { margin-left: 2px; margin-right: 12px; flex: none; }
.lbl, .lbl-b, .lbl-c { white-space: nowrap; }
.ico-eye-2 { margin-left: 2px; margin-right: 8px; flex: none; }
.folder-b { margin-right: 11px; flex: none; }
.ico-eye-3 { margin-left: 3px; margin-right: 8px; flex: none; }
.sk-ico { margin-right: 10px; flex: none; }
.wavy::after { content: ""; position: absolute; left: 20px; right: 2px; bottom: 1px; border-bottom: 1px dashed #4a7fc8; }

/* dimension input */
.dimbox { position: absolute; left: 687px; top: 203px; width: 92px; height: 16px; background: #f0f0f0; display: flex; align-items: center; padding: 0 4px 0 13px; }
.dim-input { width: 58px; height: 14px; background: #fff; display: flex; align-items: center; justify-content: center; font-size: 9px; color: #fff; }
.dim-sel { background: #1272d0; padding: 0 1px; line-height: 12px; }
.dim-dots { margin-left: auto; margin-right: 3px; font-size: 11px; line-height: 14px; color: #888; }

/* edit feature */
.feature { position: absolute; left: 879px; top: 64px; width: 213px; height: 234px; background: #f0f0f0; border-top: 1px solid #e4e4e4; display: flex; flex-direction: column; }
.feat-head { height: 17px; display: flex; align-items: center; border-bottom: 1px solid #ddd; flex: none; }
.feat-head .grip { margin: 0 4px 0 2px; }
.feat-head .minus { margin-left: 0; }
.feat-title { margin-left: 3px; }
.ffw { margin-left: auto; margin-right: 3px; font-size: 8px; letter-spacing: -2px; color: #333; width: 11px; }
.feat-body { padding: 2px 0 0 11px; display: flex; flex-direction: column; gap: 2.500px; flex: none; }
.frow { height: 20px; display: flex; align-items: center; font-size: 9px; color: #666; }
.frow label { width: 63px; flex: none; }
.type-on { width: 20px; height: 20px; background: #0696d7; display: flex; align-items: center; justify-content: center; }
.type-off { margin-left: 7px; }
.profiles { width: 67px; height: 20px; background: #0696d7; color: #e8f6fd; display: flex; align-items: center; padding-left: 7px; gap: 3px; font-size: 9px; }
.clear { margin-left: 9px; font-size: 10px; color: #444; }
.sel, .inp { width: 112px; height: 20px; background: #fff; border: 1px solid #e4e4e4; display: flex; align-items: center; font-size: 9px; color: #666; padding-left: 3px; }
.sel svg { flex: none; margin-right: 2px; }
.sel .caret { margin-left: auto; margin-right: 5px; }
.fsep { height: 2px; margin: 1.500px 11px 1.500px -11px; background: #c8c8c8; }
.feat-foot { flex: 1; margin-top: 2px; border-top: 1px solid #ddd; display: flex; align-items: center; padding: 0 9px 0 9px; }
.info { width: 9px; height: 9px; border-radius: 50%; background: #111; color: #fff; font: 700 7px/9px "Liberation Serif", serif; text-align: center; }
.btn { height: 14px; padding: 0; border: 1px solid #bbb; background: #e8e8e8; font: 9.500px "Liberation Sans", sans-serif; color: #888; }
.btn-ok { width: 51px; margin-left: auto; }
.btn-cancel { width: 51px; margin-left: 9px; color: #777; background: #f0f0f0; }

/* bottom overlays */
.comments { position: absolute; left: 4px; top: 347px; width: 257px; padding-left: 21px; }
.navbar { position: absolute; left: 447px; top: 347px; width: 203px; height: 17px; background: #f0f0f0; display: flex; align-items: center; padding-left: 6px; }
.navbar .caret { margin-left: 2px; border-width: 2.500px 2.500px 0; }
.nv-look { margin-left: 5px; }
.nv-hand { margin-left: 10px; }
.nv-zoom { margin-left: 8px; }
.nv-zw { margin-left: 8px; }
.nv-disp { margin-left: 3px; }
.nv-grid { margin-left: 3px; }
.nv-vp { margin-left: 3px; }
.status { position: absolute; right: 10px; top: 350px; font-size: 8.500px; font-weight: 700; color: #555; }

/* timeline */
.timeline { height: 33px; flex: none; background: #f0f0f0; border-top: 2px solid #ccc; display: flex; align-items: center; position: relative; }
.player { display: flex; align-items: center; gap: 10px; margin-left: 10px; width: 115px; flex: none; }
.steps { display: flex; gap: 5.500px; height: 31px; padding-top: 9px; position: relative; width: 130px; }
.bracket { position: absolute; left: 7px; width: 104px; top: 24px; height: 5px; border: 1px solid #bbb; border-top: 0; background: repeating-linear-gradient(90deg, transparent 0 19.500px, #bbb 19.500px 20.500px); }
.marker { position: absolute; left: 119px; top: 8px; width: 2px; height: 23px; background: #555; }
.marker::before { content: ""; position: absolute; left: -5px; top: 0; border-left: 6px solid transparent; border-right: 6px solid transparent; border-top: 6px solid #555; }
.cog { margin-left: auto; margin-right: 7px; }
```
